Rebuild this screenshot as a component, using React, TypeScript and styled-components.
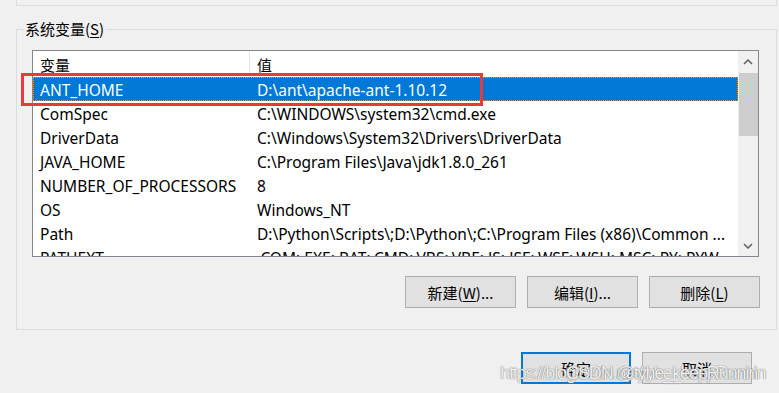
import React from "react";
import styled, { createGlobalStyle } from "styled-components";

const GlobalStyle = createGlobalStyle`
    body {
        margin: 0;
        background: #f0f0f0;
        font-family: "Noto Sans", "Noto Sans CJK SC", sans-serif;
        font-size: 15px;
        color: #000;
    }
`;

const Page = styled.div`
    position: relative;
    width: 779px;
    height: 393px;
    overflow: hidden;
    background: #f0f0f0;
`;

const PrevGroup = styled.div`
    margin-left: 16px;
    width: 759px;
    height: 5px;
    border: 1px solid #dcdcdc;
    border-top: none;
`;

const Group = styled.fieldset`
    margin: 13px 0 0 16px;
    width: 761px;
    height: 311px;
    box-sizing: border-box;
    border: 1px solid #dcdcdc;
    padding: 0 0 0 15px;
    display: flex;
    flex-direction: column;
`;

const Legend = styled.legend`
    margin-left: -8px;
    padding: 0 2px 0 1px;
    font-family: "Noto Sans CJK SC", "Noto Sans", sans-serif;
    font-size: 15px;
    line-height: 20px;
`;

const Mn = styled.span`
    text-decoration: underline;
    text-underline-offset: 2px;
`;

const ListBox = styled.div`
    margin-top: 11px;
    width: 727px;
    height: 207px;
    box-sizing: border-box;
    border: 1px solid #828790;
    background: #fff;
    display: flex;
    overflow: hidden;
`;

const Table = styled.div`
    flex: 1;
    display: flex;
    flex-direction: column;
    font-size: 15.5px;
`;

const HeaderRow = styled.div`
    display: grid;
    grid-template-columns: 217px 1fr;
    height: 26px;
    flex-shrink: 0;
`;

const HeaderCell = styled.div<{ $divider?: boolean }>`
    padding-left: 7px;
    display: flex;
    align-items: center;
    font-family: "Noto Sans CJK SC", sans-serif;
    font-size: 15px;
    border-right: ${(p) => (p.$divider ? "1px solid #e5e5e5" : "none")};
    padding-top: 1px;
`;

const Row = styled.div<{ $selected?: boolean }>`
    display: grid;
    grid-template-columns: 217px 1fr;
    height: 24px;
    flex-shrink: 0;
    box-sizing: border-box;
    background: ${(p) => (p.$selected ? "#0078d7" : "transparent")};
    color: ${(p) => (p.$selected ? "#fff" : "#000")};
    border: 1px dotted ${(p) => (p.$selected ? "#f08a24" : "transparent")};
`;

const Cell = styled.div`
    padding-left: 6px;
    display: flex;
    align-items: center;
    white-space: nowrap;
    overflow: hidden;
    line-height: 22px;
    padding-top: 1px;
`;

const Scrollbar = styled.div`
    width: 20px;
    flex-shrink: 0;
    background: #f0f0f0;
    display: flex;
    flex-direction: column;
    align-items: center;
`;

const Arrow = styled.div`
    height: 21px;
    width: 100%;
    flex-shrink: 0;
    display: flex;
    align-items: center;
    justify-content: center;
`;

const Track = styled.div`
    flex: 1;
    width: 100%;
`;

const Thumb = styled.div`
    margin-top: 1px;
    margin-left: 1px;
    width: 19px;
    height: 63px;
    background: #cdcdcd;
`;

const ButtonRow = styled.div`
    margin-top: 19px;
    width: 728px;
    display: flex;
    justify-content: flex-end;
    gap: 11px;
`;

const Button = styled.button<{ $default?: boolean }>`
    width: ${(p) => (p.$default !== undefined ? "110px" : "111px")};
    height: 32px;
    box-sizing: border-box;
    background: #e1e1e1;
    border: ${(p) => (p.$default ? "2px solid #0078d7" : "1px solid #adadad")};
    font-family: "Noto Sans CJK SC", "Noto Sans", sans-serif;
    font-size: 15px;
    color: #000;
    padding: 0;
    display: flex;
    align-items: center;
    justify-content: center;
`;

const DialogButtons = styled.div`
    margin-top: 22px;
    width: 752px;
    display: flex;
    justify-content: flex-end;
    gap: 11px;
`;

const RedMark = styled.div`
    position: absolute;
    left: 21px;
    top: 73px;
    width: 462px;
    height: 33px;
    box-sizing: border-box;
    border: 3px solid #e63a3d;
    pointer-events: none;
`;

const Watermark = styled.div`
    position: absolute;
    left: 500px;
    top: 363px;
    font-family: "Liberation Sans", sans-serif;
    font-size: 18px;
    letter-spacing: -1.1px;
    color: rgba(255, 255, 255, 0.88);
    text-shadow: 0 0 1px #808080, 0 0 1px #808080;
    white-space: nowrap;
    pointer-events: none;
`;

const WatermarkOver = styled(Watermark)`
    left: 566px;
`;

const Chevron = ({ down }: { down?: boolean }) => (
    <svg width="10" height="6" viewBox="0 0 10 6">
        <path
            d={down ? "M1 1 L5 5 L9 1" : "M1 5 L5 1 L9 5"}
            fill="none"
            stroke="#606060"
            strokeWidth="1.5"
        />
    </svg>
);

const vars = [
    ["ANT_HOME", "D:\\ant\\apache-ant-1.10.12"],
    ["ComSpec", "C:\\WINDOWS\\system32\\cmd.exe"],
    ["DriverData", "C:\\Windows\\System32\\Drivers\\DriverData"],
    ["JAVA_HOME", "C:\\Program Files\\Java\\jdk1.8.0_261"],
    ["NUMBER_OF_PROCESSORS", "8"],
    ["OS", "Windows_NT"],
    ["Path", "D:\\Python\\Scripts\\;D:\\Python\\;C:\\Program Files (x86)\\Common ..."],
    ["PATHEXT", ".COM;.EXE;.BAT;.CMD;.VBS;.VBE;.JS;.JSE;.WSF;.WSH;.MSC;.PY;.PYW"],
];

export default function App() {
    return (
        <Page>
            <GlobalStyle />
            <PrevGroup />
            <Group>
                <Legend>
                    系统变量(<Mn>S</Mn>)
                </Legend>
                <ListBox>
                    <Table>
                        <HeaderRow>
                            <HeaderCell $divider>变量</HeaderCell>
                            <HeaderCell>值</HeaderCell>
                        </HeaderRow>
                        {vars.map(([name, value], i) => (
                            <Row key={name} $selected={i === 0}>
                                <Cell>{name}</Cell>
                                <Cell>{value}</Cell>
                            </Row>
                        ))}
                    </Table>
                    <Scrollbar>
                        <Arrow>
                            <Chevron />
                        </Arrow>
                        <Track>
                            <Thumb />
                        </Track>
                        <Arrow>
                            <Chevron down />
                        </Arrow>
                    </Scrollbar>
                </ListBox>
                <ButtonRow>
                    <Button>
                        新建(<Mn>W</Mn>)...
                    </Button>
                    <Button>
                        编辑(<Mn>I</Mn>)...
                    </Button>
                    <Button>
                        删除(<Mn>L</Mn>)
                    </Button>
                </ButtonRow>
            </Group>
            <DialogButtons>
                <Button $default>确定</Button>
                <Button $default={false}>取消</Button>
            </DialogButtons>
            <RedMark />
            <Watermark>https://blog.csdn.net/tyhe_keepRunnin</Watermark>
            <WatermarkOver>CSDN @tyhe_keepRunnin</WatermarkOver>
        </Page>
    );
}
